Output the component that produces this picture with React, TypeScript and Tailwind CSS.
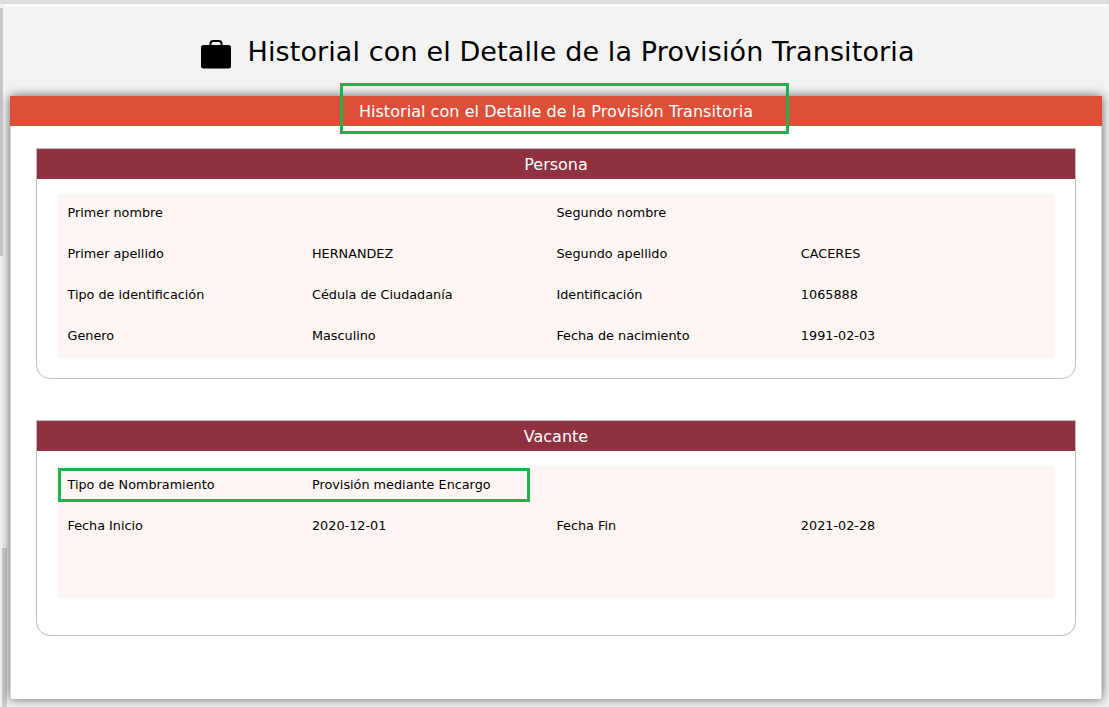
const rowsPersona = [
  ['Primer nombre', '', 'Segundo nombre', ''],
  ['Primer apellido', 'HERNANDEZ', 'Segundo apellido', 'CACERES'],
  ['Tipo de identificación', 'Cédula de Ciudadanía', 'Identificación', '1065888'],
  ['Genero', 'Masculino', 'Fecha de nacimiento', '1991-02-03'],
]

const rowsVacante = [
  ['Tipo de Nombramiento', 'Provisión mediante Encargo', '', ''],
  ['Fecha Inicio', '2020-12-01', 'Fecha Fin', '2021-02-28'],
]

function Briefcase() {
  return (
    <svg width="30" height="29" viewBox="0 0 30 29" className="ml-px mt-[6px] shrink-0">
      <path
        d="M9.500 7V3.500C9.500 2 10.500 1 12 1h6C19.500 1 20.500 2 20.500 3.500V7"
        fill="none"
        stroke="#000"
        strokeWidth="2"
      />
      <rect x="0" y="5" width="30" height="23.500" rx="2.500" fill="#000" />
    </svg>
  )
}

function Section({ title, rows, extra }: { title: string; rows: string[][]; extra?: boolean }) {
  return (
    <section className={`mx-[25px] border border-[#bdbdbd] rounded-b-[14px] h-fit ${extra ? 'pb-[37px]' : 'pb-5'}`}>
      <h2 className="h-[30px] bg-[#8e3140] text-white text-[16px] leading-[32px] text-center">{title}</h2>
      <div className="mx-5 mt-[15px] pl-[10.500px] pr-[9.700px] bg-[#fef6f4]">
        {rows.map((row) => (
          <div key={row[0]} className="grid grid-cols-4 h-[41px] pt-[9px] text-[12.800px] leading-5 text-black">
            {row.map((cell, i) => (
              <span key={i}>{cell}</span>
            ))}
          </div>
        ))}
        {extra && <div className="h-[50px]" />}
      </div>
    </section>
  )
}

export default function App() {
  return (
    <div className="relative h-[707px] w-[1109px] overflow-hidden bg-[#f3f3f3] font-['DejaVu_Sans',Verdana,sans-serif]">
      <div className="h-1 bg-[#dddddd]" />
      <div className="ml-[5px] mr-[2px] h-[3px] bg-white" />
      <div className="absolute left-0 top-2 h-[248px] w-[3px] bg-[#c8c8c8]" />
      <div className="absolute left-[2px] top-[548px] h-[159px] w-[5px] bg-[#cdcdcd]" />

      <header className="flex h-[89px] items-start justify-center gap-4 pt-[27px] pl-[6px]">
        <Briefcase />
        <h1 className="text-[27px] leading-[36px] text-black tracking-[0.120px]">
          Historial con el Detalle de la Provisión Transitoria
        </h1>
      </header>

      <main className="relative ml-[10px] mr-[7px] h-[603px] shadow-[0_0_10px_rgba(0,0,0,0.6)]">
        <div className="h-[30px] bg-[#dc5039] text-white text-[16px] tracking-[0.050px] leading-[32px] text-center">
          Historial con el Detalle de la Provisión Transitoria
        </div>
        <div className="flex h-[573px] flex-col gap-[41px] border-x border-[#d4d4d4] bg-white pt-[22px]">
          <Section title="Persona" rows={rowsPersona} />
          <Section title="Vacante" rows={rowsVacante} extra />
        </div>

        {/* green marks drawn over the capture */}
        <div className="absolute left-[330px] top-[-13px] h-[51px] w-[449px] border-[3px] border-[#22b14c]" />
        <div className="absolute left-[48px] top-[372px] h-[34px] w-[472px] border-[3px] border-[#22b14c]" />
      </main>
    </div>
  )
}
